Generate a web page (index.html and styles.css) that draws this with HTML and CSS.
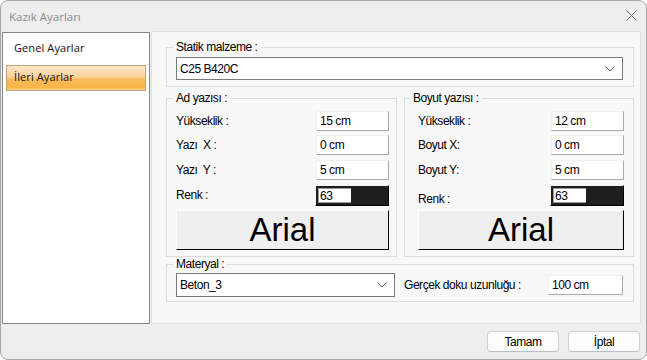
FILE: index.html
```html
<!DOCTYPE html>
<html>
    <head>
        <title>Kazık Ayarları</title>
        <link rel="stylesheet" href="styles.css">
    </head>

<body>
    <div class="pencere">
        <div class="baslik">
            <span>Kazık Ayarları</span>
            <svg class="kapat" width="11" height="11" viewBox="0 0 11 11">
                <path d="M0.5 0.5 L10.5 10.5 M10.5 0.5 L0.5 10.5" stroke="#6b6b6b" stroke-width="1" fill="none"/>
            </svg>
        </div>

        <div class="icerik">
            <ul class="menu">
                <li>Genel Ayarlar</li>
                <li class="secili">İleri Ayarlar</li>
            </ul>

            <div class="panel">
                <fieldset class="grup">
                    <legend>Statik malzeme :</legend>
                    <div class="secim">
                        <span>C25 B420C</span>
                        <svg width="10" height="6" viewBox="0 0 10 6"><path d="M0.5 0.5 L5 5 L9.5 0.5" stroke="#606060" fill="none"/></svg>
                    </div>
                </fieldset>

                <div class="ikili">
                    <fieldset class="grup sol">
                        <legend>Ad yazısı :</legend>
                        <div class="satir"><label>Yükseklik :</label><div class="kutu">15 cm</div></div>
                        <div class="satir"><label>Yazı&nbsp; X :</label><div class="kutu">0 cm</div></div>
                        <div class="satir"><label>Yazı&nbsp; Y :</label><div class="kutu">5 cm</div></div>
                        <div class="satir"><label>Renk :</label><div class="renk"><span>63</span><i></i></div></div>
                        <div class="yazitipi">Arial</div>
                    </fieldset>

                    <fieldset class="grup sag">
                        <legend>Boyut yazısı :</legend>
                        <div class="satir"><label>Yükseklik :</label><div class="kutu">12 cm</div></div>
                        <div class="satir"><label>Boyut X:</label><div class="kutu">0 cm</div></div>
                        <div class="satir"><label>Boyut Y:</label><div class="kutu">5 cm</div></div>
                        <div class="satir"><label class="alt">Renk :</label><div class="renk"><span>63</span><i></i></div></div>
                        <div class="yazitipi">Arial</div>
                    </fieldset>
                </div>

                <fieldset class="grup materyal">
                    <legend>Materyal :</legend>
                    <div class="secim kisa">
                        <span>Beton_3</span>
                        <svg width="10" height="6" viewBox="0 0 10 6"><path d="M0.5 0.5 L5 5 L9.5 0.5" stroke="#606060" fill="none"/></svg>
                    </div>
                    <label>Gerçek doku uzunluğu :</label>
                    <div class="kutu genis">100 cm</div>
                </fieldset>
            </div>
        </div>

        <div class="alt-bar">
            <button>Tamam</button>
            <button>İptal</button>
        </div>
    </div>
</body>
</html>
```

FILE: styles.css
```css
body{
    margin: 0;
    background: #fff;
}
.pencere{
    width: 647px;
    height: 360px;
    box-sizing: border-box;
    border: 1px solid #a6a6a6;
    border-radius: 8px;
    overflow: hidden;
    background: #eeeeee;
    font-family: "Liberation Sans", Arial, sans-serif;
    font-size: 12px;
    letter-spacing: -0.45px;
    color: #000;
}
.baslik{
    height: 30px;
    display: flex;
    align-items: center;
    justify-content: space-between;
    padding: 0 9px 0 8px;
    font-family: "Open Sans", "Noto Sans", sans-serif;
    font-size: 11.5px;
    letter-spacing: 0;
    color: #8a8a8a;
}
.kapat{
    margin-top: -1px;
}
.icerik{
    height: 293px;
    display: flex;
    gap: 1px;
    padding: 0 5px 0 1px;
}
.menu{
    width: 148px;
    margin: 1px 0 0;
    padding: 3px 3px 0;
    box-sizing: border-box;
    list-style: none;
    background: #fff;
    border: 1px solid #878787;
    font-family: "Open Sans", "Noto Sans", sans-serif;
    font-size: 11px;
    letter-spacing: 0.1px;
    color: #111;
}
.menu li{
    height: 24px;
    line-height: 22px;
    padding-left: 7px;
    margin-bottom: 3px;
    border: 1px solid transparent;
}
.menu li.secili{
    border-color: #c0a678;
    background: linear-gradient(#fde6c6 0%, #fcd39c 45%, #f9bc5c 55%, #f8b446 90%, #fbd28a 100%);
}
.panel{
    flex: 1;
    border: 1px solid #e0e0e0;
    background: #f8f8f8;
    padding: 8px 6px 0 14px;
}
.grup{
    margin: 0;
    border: 1px solid #dcdcdc;
    padding: 2px 10px 6px 9px;
}
.grup legend{
    line-height: 15px;
    padding: 0 3px;
    margin-left: -3px;
}
.secim{
    height: 23px;
    box-sizing: border-box;
    border: 1px solid #7a7a7a;
    background: #fff;
    display: flex;
    align-items: center;
    justify-content: space-between;
    padding: 0 7px 0 3px;
}
.ikili{
    display: grid;
    grid-template-columns: 231px 230px;
    gap: 7px;
    margin-top: 4px;
}
.sol{
    padding: 5px 7px 6px 9px;
}
.sag{
    padding: 5px 9px 6px 13px;
}
.sag legend{
    margin-left: -8px;
}
.satir{
    display: flex;
    justify-content: space-between;
    align-items: center;
    height: 20px;
    margin-bottom: 5px;
}
.satir:first-of-type{
    margin-bottom: 4px;
}
.satir .alt{
    margin-top: 7px;
}
.kutu{
    width: 73px;
    height: 20px;
    box-sizing: border-box;
    background: #fff;
    border: 1px solid;
    border-color: #f0f0f0 #a9a9a9 #a9a9a9 #f0f0f0;
    padding: 0 3px;
    line-height: 18px;
}
.renk{
    width: 74px;
    height: 21px;
    box-sizing: border-box;
    display: flex;
    border: 1px solid;
    border-color: #f4f4f4 #000 #000 #f4f4f4;
    background: #1e1e1e;
    padding: 2px;
}
.renk span{
    width: 31px;
    background: #fff;
    border: 1px solid #9a9a9a;
    border-right: 0;
    line-height: 15px;
    padding-left: 1px;
}
.renk i{
    flex: 1;
}
.yazitipi{
    height: 40px;
    box-sizing: border-box;
    border: 1px solid;
    border-color: #fff #000 #000 #fff;
    background: #efefef;
    text-align: center;
    font-size: 33px;
    letter-spacing: 0;
    line-height: 38px;
}
.materyal{
    display: flex;
    align-items: center;
    padding: 1px 10px 4px 9px;
}
.secim.kisa{
    width: 219px;
    height: 24px;
    margin-right: 9px;
}
.kutu.genis{
    width: 75px;
    margin-left: auto;
}
.alt-bar{
    display: flex;
    justify-content: flex-end;
    gap: 9px;
    padding: 7px 6px 0 0;
}
.alt-bar button{
    width: 72px;
    height: 21px;
    background: #fdfdfd;
    border: 1px solid #d0d0d0;
    border-bottom-color: #bcbcbc;
    border-radius: 4px;
    font-family: "Liberation Sans", Arial, sans-serif;
    font-size: 12px;
    letter-spacing: -0.45px;
    color: #000;
    padding: 0;
}
```
